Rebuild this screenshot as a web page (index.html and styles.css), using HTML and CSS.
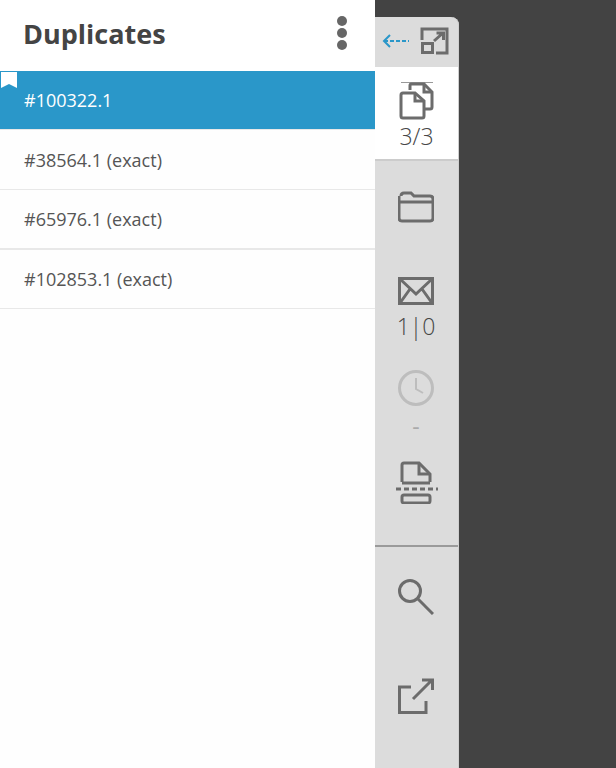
FILE: index.html
```html
<!DOCTYPE html>
<html>
<head>
<title>Duplicates</title>
<link rel="stylesheet" href="styles.css">
</head>
<body>
  <div class="panel">
    <div class="panel-head">
      <h1 class="panel-title">Duplicates</h1>
      <svg class="kebab" width="10" height="36" viewBox="0 0 10 36"><circle cx="5" cy="5" r="5"/><circle cx="5" cy="17" r="5"/><circle cx="5" cy="29" r="5"/></svg>
    </div>
    <div class="dup-row dup-active">
      <svg class="bookmark" width="18" height="18" viewBox="0 0 18 18"><path d="M1 1H17V17L9 13L1 17Z"/></svg>
      #100322.1
    </div>
    <div class="dup-row">#38564.1 (exact)</div>
    <div class="dup-row dup-thick">#65976.1 (exact)</div>
    <div class="dup-row">#102853.1 (exact)</div>
  </div>

  <div class="sidebar">
    <div class="side-top">
      <svg class="back" width="28" height="14" viewBox="0 0 28 14"><path d="M2 7H27" stroke-dasharray="4 2"/><path d="M8 1L2 7L8 13"/></svg>
      <svg class="ico" width="30" height="30" viewBox="0 0 30 30"><path d="M2 14V3H27V27H16"/><rect x="2.500" y="17.500" width="10" height="9"/><path d="M14 15L23 7M16.500 7H23.500V14"/></svg>
    </div>

    <div class="side-tab">
      <svg class="ico" width="36" height="38" viewBox="0 0 36 38"><path class="thin" d="M2 .5H34"/><path d="M11 8V3.500Q11 2 12.500 2H25L33 10V25Q33 27 31 27H26"/><path d="M25 2V10H33"/><path d="M4 11H16L25 19V34Q25 36 23 36H4Q2 36 2 34V13Q2 11 4 11Z"/><path d="M16 11V19H25"/></svg>
      <div class="tool-num tool-num-tab">3/3</div>
    </div>

    <svg class="ico tool-folder" width="36" height="36" viewBox="0 0 36 36"><path d="M3 8Q3 5 6 5H13L16 8H32Q35 8 35 11V30Q35 33 32 33H4Q1 33 1 30V8"/><path d="M1 14H35"/></svg>

    <svg class="ico tool-mail" width="36" height="36" viewBox="0 0 36 36"><rect x="1.500" y="5.500" width="33" height="25"/><path d="M2 6L18 21L34 6M2 30L12 16M34 30L24 16"/></svg>
    <div class="tool-num tool-num-mail">1|0</div>

    <svg class="ico ico-off tool-clock" width="36" height="36" viewBox="0 0 36 36"><circle cx="18" cy="18" r="16.500"/><path class="thin-off" d="M18 8V19L25 23"/></svg>
    <div class="tool-num tool-num-off">-</div>

    <svg class="ico tool-print" width="44" height="44" viewBox="0 0 44 44"><path d="M8 22V5Q8 3 10 3H25L36 14V22"/><path d="M25 3V14H36M8 23H36"/><path d="M2 29H44" stroke-dasharray="5 3"/><rect x="8" y="35" width="28" height="8" rx="2"/></svg>

    <div class="side-rule"></div>

    <svg class="ico tool-search" width="36" height="36" viewBox="0 0 36 36"><circle cx="12" cy="12" r="10.500"/><path d="M20 20L35 35"/></svg>

    <svg class="ico tool-open" width="36" height="36" viewBox="0 0 36 36"><path d="M13 9H1.500V34.500H28V23"/><path d="M15 21L34 2M24 2H34.500V12"/></svg>
  </div>
</body>
</html>
```

FILE: styles.css
```css
html, body {
  height: 100%;
}
body {
  background-color: #434343;
  display: flex;
  font-family: "Open Sans", sans-serif;
  margin: 0;
  overflow: hidden;
}
.panel {
  background-color: #fefefe;
  height: 768px;
  width: 375px;
}
.panel-head {
  align-items: center;
  background-color: #fff;
  box-sizing: border-box;
  display: flex;
  height: 71px;
  justify-content: space-between;
  padding: 0 28px 4px 23px;
}
.panel-title {
  color: #444;
  font-size: 27px;
  font-weight: 700;
  margin: 0;
}
.kebab {
  fill: #666;
}
.dup-row {
  align-items: center;
  border-bottom: 1px solid #e8e8e8;
  box-sizing: border-box;
  color: #555;
  display: flex;
  font-size: 18px;
  height: 60px;
  padding: 1px 0 0 24px;
}
.dup-row:last-child {
  height: 59px;
  padding-top: 0;
}
.dup-active {
  background-color: #2a97c9;
  background-clip: padding-box;
  color: #fff;
  height: 59px;
  padding-top: 0;
  position: relative;
}
.dup-thick {
  border-bottom-width: 2px;
  padding-top: 0;
}
.bookmark {
  fill: #fff;
  left: 0;
  position: absolute;
  top: 0;
}
.sidebar {
  align-items: center;
  background-color: #dcdcdc;
  border-top-right-radius: 8px;
  box-shadow: inset -1px 0 0 #cfcfcf;
  box-sizing: border-box;
  display: flex;
  flex-direction: column;
  height: 751px;
  margin-top: 17px;
  padding-right: 2px;
  width: 84px;
}
.side-top {
  align-items: center;
  align-self: stretch;
  box-sizing: border-box;
  display: flex;
  flex-shrink: 0;
  gap: 10px;
  height: 50px;
  padding: 0 0 2px 7px;
}
.side-tab {
  align-items: center;
  align-self: stretch;
  background-color: #fff;
  border-bottom: 2px solid #ccc;
  box-sizing: border-box;
  display: flex;
  flex-direction: column;
  flex-shrink: 0;
  height: 94px;
  margin-right: -1px;
  padding-top: 15px;
}
.ico {
  display: block;
  fill: none;
  flex-shrink: 0;
  stroke: #6c6c6c;
  stroke-width: 3;
}
.ico-off {
  stroke: #bdbdbd;
}
.thin {
  stroke: #999;
  stroke-width: 1;
}
.thin-off {
  stroke-width: 2;
}
.back {
  fill: none;
  stroke: #2a97c9;
  stroke-width: 2;
}
.tool-num {
  color: #444;
  font-size: 23px;
  font-weight: 300;
  line-height: 24px;
  opacity: .99;
}
.tool-num-tab {
  margin-top: 4px;
}
.tool-folder {
  margin-top: 27px;
}
.tool-mail {
  margin-top: 49px;
}
.tool-num-mail {
  margin-top: 5px;
}
.tool-clock {
  margin-top: 32px;
}
.tool-num-off {
  color: #aaa;
  font-weight: 400;
  margin-top: 8px;
}
.tool-print {
  margin-top: 22px;
}
.side-rule {
  align-self: stretch;
  background-color: #9a9a9a;
  flex-shrink: 0;
  height: 2px;
  margin-right: -1px;
  margin-top: 41px;
}
.tool-search {
  margin-top: 32px;
}
.tool-open {
  margin-top: 63px;
}
```
